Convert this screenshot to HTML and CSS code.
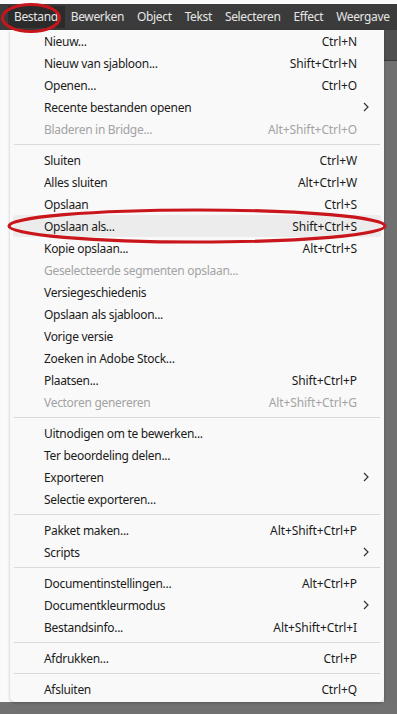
FILE: index.html
```html
<!DOCTYPE html>
<html lang="nl">
<head>
    <meta charset="UTF-8">
    <meta name="viewport" content="width=device-width, initial-scale=1.0">
    <title>Bestand menu</title>
    <link rel="stylesheet" href="styles.css">
</head>
<body>
  <div class="screen">
    <div class="topline"></div>
    <nav class="menubar">
      <span class="mb-item active">Bestand</span>
      <span class="mb-item">Bewerken</span>
      <span class="mb-item">Object</span>
      <span class="mb-item">Tekst</span>
      <span class="mb-item">Selecteren</span>
      <span class="mb-item">Effect</span>
      <span class="mb-item">Weergave</span>
    </nav>

    <div class="workspace">
      <div class="left-strip"></div>
      <ul class="menu">
        <li class="item"><span class="label">Nieuw...</span><span class="keys">Ctrl+N</span><span class="sub"></span></li>
        <li class="item"><span class="label">Nieuw van sjabloon...</span><span class="keys">Shift+Ctrl+N</span><span class="sub"></span></li>
        <li class="item"><span class="label">Openen...</span><span class="keys">Ctrl+O</span><span class="sub"></span></li>
        <li class="item"><span class="label">Recente bestanden openen</span><span class="keys"></span><span class="sub"><svg width="6" height="10" viewBox="0 0 6 10"><path d="M1 1l4 4-4 4" fill="none" stroke="#333" stroke-width="1.2"/></svg></span></li>
        <li class="item disabled"><span class="label">Bladeren in Bridge...</span><span class="keys">Alt+Shift+Ctrl+O</span><span class="sub"></span></li>
        <li class="sep"></li>
        <li class="item"><span class="label">Sluiten</span><span class="keys">Ctrl+W</span><span class="sub"></span></li>
        <li class="item"><span class="label">Alles sluiten</span><span class="keys">Alt+Ctrl+W</span><span class="sub"></span></li>
        <li class="item"><span class="label">Opslaan</span><span class="keys">Ctrl+S</span><span class="sub"></span></li>
        <li class="item hover"><span class="label">Opslaan als...</span><span class="keys">Shift+Ctrl+S</span><span class="sub"></span></li>
        <li class="item"><span class="label">Kopie opslaan...</span><span class="keys">Alt+Ctrl+S</span><span class="sub"></span></li>
        <li class="item disabled"><span class="label">Geselecteerde segmenten opslaan...</span><span class="keys"></span><span class="sub"></span></li>
        <li class="item"><span class="label">Versiegeschiedenis</span><span class="keys"></span><span class="sub"></span></li>
        <li class="item"><span class="label">Opslaan als sjabloon...</span><span class="keys"></span><span class="sub"></span></li>
        <li class="item"><span class="label">Vorige versie</span><span class="keys"></span><span class="sub"></span></li>
        <li class="item"><span class="label">Zoeken in Adobe Stock...</span><span class="keys"></span><span class="sub"></span></li>
        <li class="item"><span class="label">Plaatsen...</span><span class="keys">Shift+Ctrl+P</span><span class="sub"></span></li>
        <li class="item disabled"><span class="label">Vectoren genereren</span><span class="keys">Alt+Shift+Ctrl+G</span><span class="sub"></span></li>
        <li class="sep"></li>
        <li class="item"><span class="label">Uitnodigen om te bewerken...</span><span class="keys"></span><span class="sub"></span></li>
        <li class="item"><span class="label">Ter beoordeling delen...</span><span class="keys"></span><span class="sub"></span></li>
        <li class="item"><span class="label">Exporteren</span><span class="keys"></span><span class="sub"><svg width="6" height="10" viewBox="0 0 6 10"><path d="M1 1l4 4-4 4" fill="none" stroke="#333" stroke-width="1.2"/></svg></span></li>
        <li class="item"><span class="label">Selectie exporteren...</span><span class="keys"></span><span class="sub"></span></li>
        <li class="sep"></li>
        <li class="item"><span class="label">Pakket maken...</span><span class="keys">Alt+Shift+Ctrl+P</span><span class="sub"></span></li>
        <li class="item"><span class="label">Scripts</span><span class="keys"></span><span class="sub"><svg width="6" height="10" viewBox="0 0 6 10"><path d="M1 1l4 4-4 4" fill="none" stroke="#333" stroke-width="1.2"/></svg></span></li>
        <li class="sep"></li>
        <li class="item"><span class="label">Documentinstellingen...</span><span class="keys">Alt+Ctrl+P</span><span class="sub"></span></li>
        <li class="item"><span class="label">Documentkleurmodus</span><span class="keys"></span><span class="sub"><svg width="6" height="10" viewBox="0 0 6 10"><path d="M1 1l4 4-4 4" fill="none" stroke="#333" stroke-width="1.2"/></svg></span></li>
        <li class="item"><span class="label">Bestandsinfo...</span><span class="keys">Alt+Shift+Ctrl+I</span><span class="sub"></span></li>
        <li class="sep"></li>
        <li class="item"><span class="label">Afdrukken...</span><span class="keys">Ctrl+P</span><span class="sub"></span></li>
        <li class="sep"></li>
        <li class="item"><span class="label">Afsluiten</span><span class="keys">Ctrl+Q</span><span class="sub"></span></li>
      </ul>
      <div class="right-strip">
        <div class="panel-top"></div>
      </div>
    </div>
    <div class="floor"></div>

    <!-- rode markeringen -->
    <svg class="mark mark-bestand" width="62" height="32" viewBox="0 0 62 32">
      <ellipse cx="31" cy="16" rx="28.5" ry="13.5" fill="none" stroke="#c9161c" stroke-width="3"/>
    </svg>
    <svg class="mark mark-save" width="384" height="38" viewBox="0 0 384 38">
      <ellipse cx="191" cy="19" rx="188" ry="16" fill="none" stroke="#c9161c" stroke-width="3.2"/>
    </svg>
  </div>
</body>
</html>
```

FILE: styles.css
```css
html{
    background: #fafafa;
}
body{
    margin: 0;
    font-family: "Noto Sans", "Open Sans", sans-serif;
}

.screen {
    position: relative;
    width: 397px;
    height: 714px;
    overflow: hidden;
    display: flex;
    flex-direction: column;
}

.topline {
    height: 4px;
    background: #fafafa;
}

.menubar {
    display: flex;
    align-items: center;
    height: 26px;
    background: #3b3b3b;
    padding-left: 8px;
    white-space: nowrap;
}

.mb-item {
    font-size: 12px;
    letter-spacing: -.35px;
    color: #e6e6e6;
    padding: 0 7px 0 6px;
    line-height: 22px;
}

.mb-item.active {
    background: #2b2b2b;
}

.workspace {
    display: grid;
    grid-template-columns: 10px 374px 1fr;
    height: 672px;
}

.left-strip {
    background: #fafafa;
}

.right-strip {
    background: #707070;
}

.panel-top {
    height: 30px;
    background: #4f4f4f;
    border-bottom: 1px solid #3a3a3a;
}

.menu {
    list-style: none;
    margin: 0;
    padding: 0 0 2px;
    background: #f9f9f9;
    border-radius: 0 0 5px 5px;
    box-shadow: 0 1px 3px rgba(0,0,0,0.25);
    position: relative;
}

.item {
    display: flex;
    align-items: center;
    height: 22px;
    font-size: 12px;
    color: #1b1b1b;
    margin: 0 3px;
}

.item .label {
    flex: 1;
    padding-left: 31px;
    white-space: nowrap;
    letter-spacing: -.3px;
}

.item .keys {
    white-space: nowrap;
    letter-spacing: -.1px;
}

.item .sub {
    width: 24px;
    display: flex;
    justify-content: flex-end;
    padding-right: 12px;
    box-sizing: border-box;
}

.item.disabled {
    color: #a3a3a3;
}

.item.hover {
    background: #ececec;
    border-radius: 3px;
}

.sep {
    height: 1px;
    margin: 4px 4px 4px;
    background: #dadada;
}

.floor {
    height: 12px;
    background: #717171;
}

.mark {
    position: absolute;
}

.mark-bestand {
    left: 0;
    top: 2px;
}

.mark-save {
    left: 6px;
    top: 207px;
}
```
